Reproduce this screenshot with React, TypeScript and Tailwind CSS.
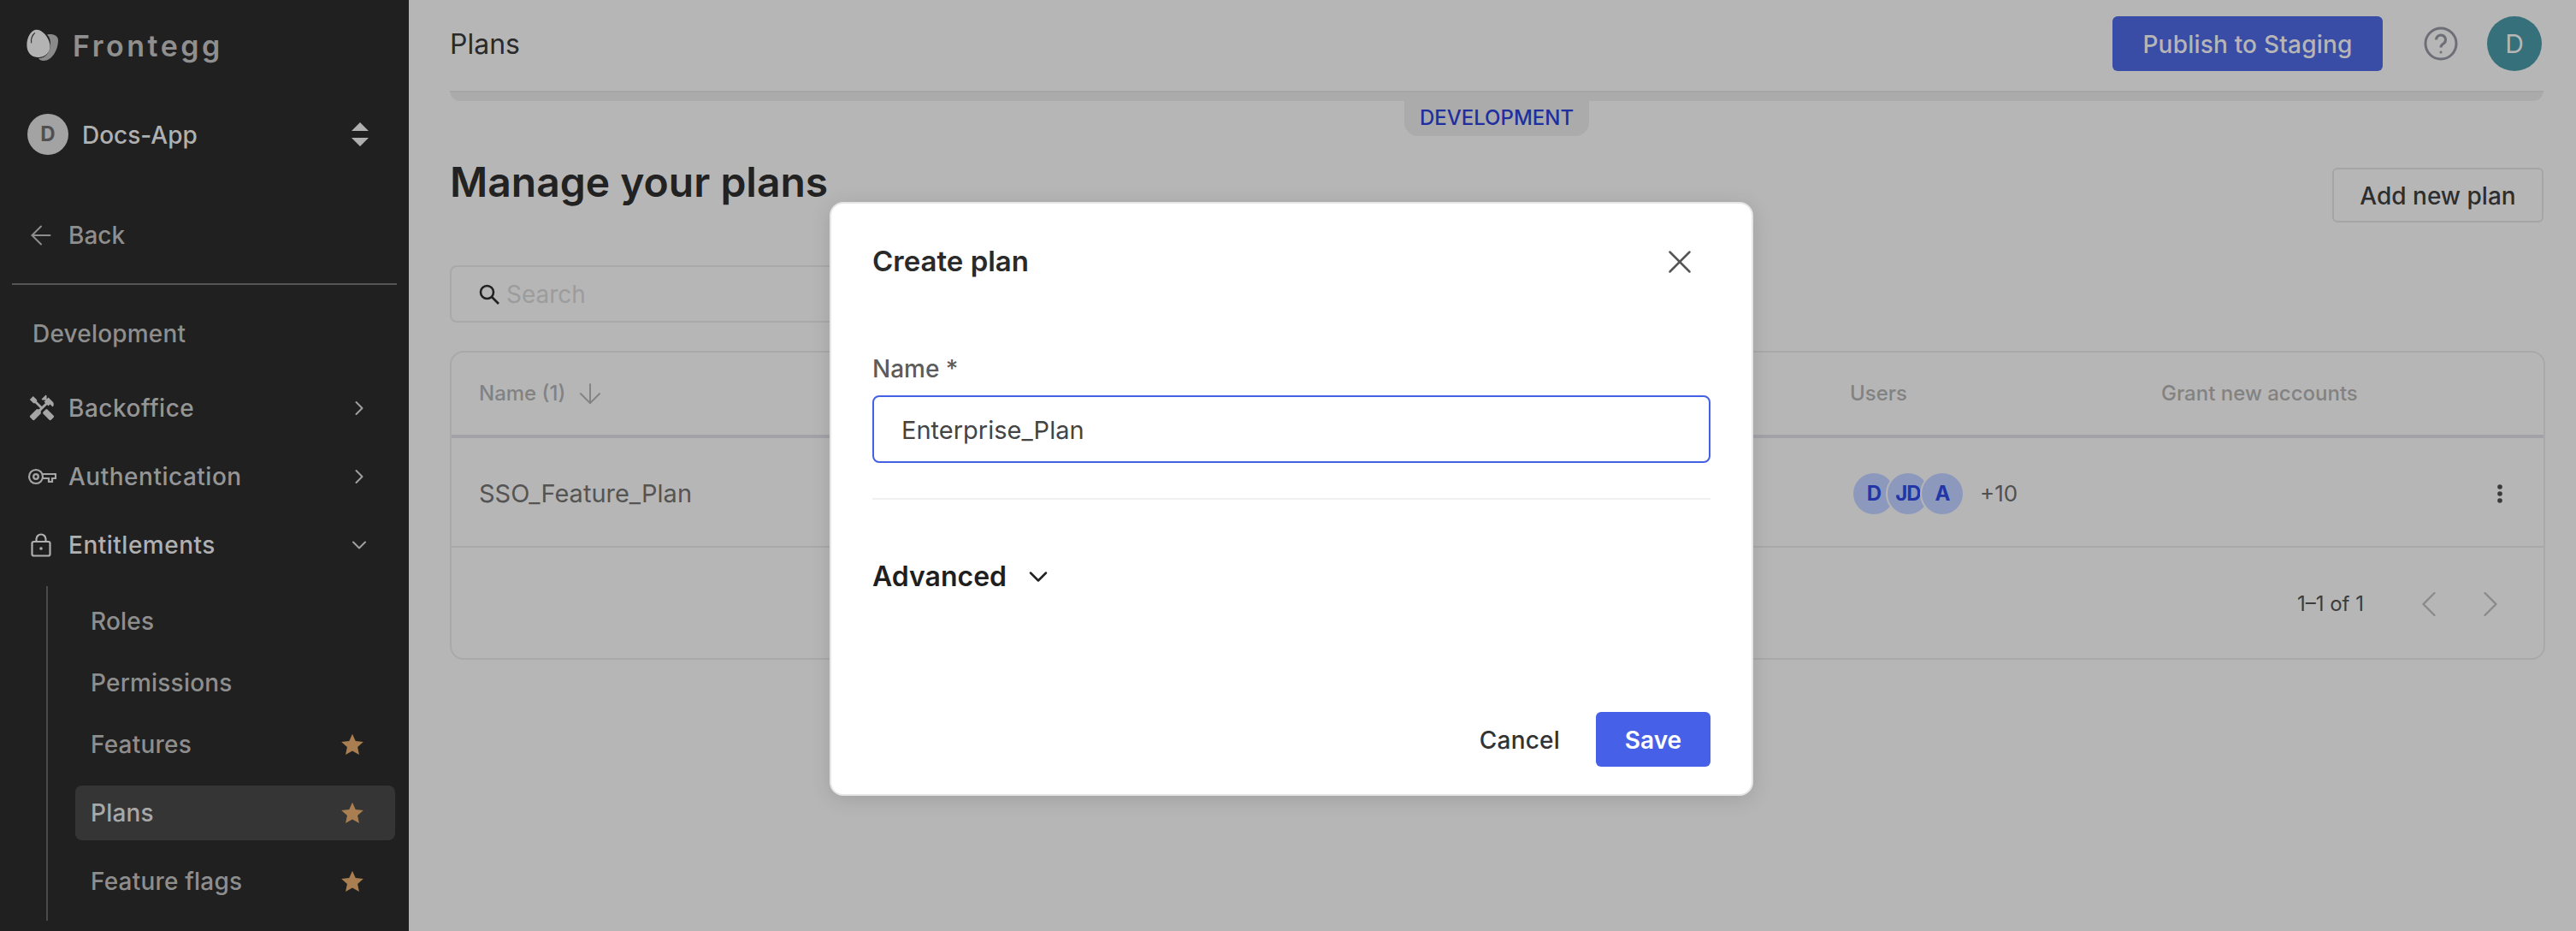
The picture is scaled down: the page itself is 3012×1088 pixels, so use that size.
import { ArrowDown, ArrowLeft, ChevronDown, ChevronLeft, ChevronRight, X } from "lucide-react"
import { MdHandyman } from "react-icons/md"

function Star() {
  return (
    <svg viewBox="0 0 24 24" className="h-[28px] w-[28px] fill-[#a97f52]">
      <path d="M12 1.5l3.2 7.1 7.8.8-5.8 5.2 1.6 7.7L12 18.4l-6.8 3.9 1.6-7.7L1 9.4l7.8-.8z" />
    </svg>
  )
}

function EggLogo() {
  return (
    <svg viewBox="0 0 38 38" className="h-[38px] w-[38px]">
      <path d="M24 6.5C30 5 37 7 37 13c0 11-7 24-17 24-3 0-5-1-6-3 9 0 14-8 14-16 0-5-1-9-4-11.500z" fill="#8a8a8a" />
      <g transform="rotate(-10 13.5 17)">
        <path d="M13.5 0.5C20 0.5 27 10 27 20c0 8-6 13-13.500 13S0 28 0 20C0 10 7 0.5 13.5 0.5z" fill="#b3b3b3" />
        <path d="M6 15c0-5 3-9 6-11" stroke="#202020" strokeWidth="1" fill="none" />
      </g>
    </svg>
  )
}

function KeyIcon() {
  return (
    <svg viewBox="0 0 34 20" className="h-[20px] w-[34px] fill-none stroke-[#a6a6a6]" strokeWidth="2.2">
      <circle cx="10" cy="10" r="8" />
      <circle cx="10" cy="10" r="2.8" />
      <path d="M18 7h15v5h-4v4h-4v-4h-7" />
    </svg>
  )
}

function LockIcon() {
  return (
    <svg viewBox="0 0 24 28" className="ml-[4px] h-[28px] w-[24px] fill-none stroke-[#b0b0b0]" strokeWidth="2.2">
      <rect x="1.5" y="10" width="21" height="16.500" rx="2" />
      <path d="M6.5 10V7a5.500 5.500 0 0 1 11 0v3" />
      <circle cx="12" cy="18" r="1.8" fill="#b0b0b0" stroke="none" />
    </svg>
  )
}

function NavItem({ icon, label, open }: { icon: React.ReactNode; label: string; open?: boolean }) {
  return (
    <div className="flex h-[80px] items-center pl-[32px] pr-[44px]">
      <div className="flex w-[48px] items-center justify-start">{icon}</div>
      <span className={`flex-1 text-[28px] font-medium tracking-[0.5px] ${open ? "text-[#b0b0b0]" : "text-[#959595]"}`}>{label}</span>
      {open ? (
        <ChevronDown className="h-[28px] w-[28px] text-[#a0a0a0]" strokeWidth={1.7} />
      ) : (
        <ChevronRight className="h-[28px] w-[28px] text-[#a0a0a0]" strokeWidth={1.7} />
      )}
    </div>
  )
}

function SubItem({ label, star, active, className }: { label: string; star?: boolean; active?: boolean; className: string }) {
  return (
    <div className={`flex items-center ${className}`}>
      <div className={`flex h-[64px] w-[374px] items-center justify-between rounded-[8px] pl-[18px] pr-[36px] ${active ? "bg-[#353535]" : ""}`}>
        <span className={`text-[28px] font-medium tracking-[0.2px] ${active ? "text-[#a8a8a8]" : "text-[#8e8e8e]"}`}>{label}</span>
        {star && <Star />}
      </div>
    </div>
  )
}

function Sidebar() {
  return (
    <aside className="flex h-full w-[478px] shrink-0 flex-col overflow-hidden bg-[#202020]">
      <div className="flex h-[106px] items-center gap-[16px] pl-[31px]">
        <EggLogo />
        <span className="text-[34px] font-semibold tracking-[3.5px] text-[#8f8f8f]">Frontegg</span>
      </div>
      <div className="mt-[27px] flex items-center pl-[32px] pr-[47px]">
        <div className="flex h-[48px] w-[48px] items-center justify-center rounded-full bg-[#a3a3a3] text-[24px] font-bold text-[#505050]">D</div>
        <span className="ml-[16px] mt-[2px] flex-1 text-[28px] font-medium text-[#b0b0b0]">Docs-App</span>
        <svg viewBox="0 0 20 28" className="h-[28px] w-[20px] fill-[#b0b0b0]">
          <path d="M10 0l10 10H0zM10 28 0 18h20z" />
        </svg>
      </div>
      <div className="mt-[74px] flex h-[40px] items-center pl-[30px] text-[#8e8e8e]">
        <ArrowLeft className="h-[36px] w-[36px]" strokeWidth={1.3} />
        <span className="ml-[14px] text-[28px] font-medium">Back</span>
      </div>
      <div className="mx-[14px] mt-[36px] h-[2px] bg-[#555555]" />
      <div className="mt-[40px] h-[34px] pl-[38px] text-[28px] font-medium leading-[34px] tracking-[0.2px] text-[#8e8e8e]">Development</div>
      <div className="mt-[30px]">
        <NavItem icon={<MdHandyman className="h-[34px] w-[34px] text-[#a6a6a6]" />} label="Backoffice" />
        <NavItem icon={<KeyIcon />} label="Authentication" />
        <NavItem icon={<LockIcon />} label="Entitlements" open />
      </div>
      <div className="ml-[54px] mt-[8px] h-[391px] border-l-2 border-[#4a4a4a] pl-[32px]">
        <SubItem label="Roles" className="mt-[5px] h-[72px]" />
        <SubItem label="Permissions" className="h-[72px]" />
        <SubItem label="Features" star className="h-[72px]" />
        <SubItem label="Plans" star active className="mt-[4px] h-[80px]" />
        <SubItem label="Feature flags" star className="h-[80px]" />
      </div>
    </aside>
  )
}

function PlansTable() {
  return (
    <div className="mt-[33px] w-[2450px] rounded-[16px] border-2 border-[#a9a9a9]">
      <div className="flex h-[100px] items-center border-b-4 border-[#a2a2a8] text-[24px] font-medium text-[#828282]">
        <div className="flex w-[1635px] items-center gap-[10px] pl-[32px]">
          <span>Name (1)</span>
          <ArrowDown className="h-[38px] w-[38px]" strokeWidth={1.2} />
        </div>
        <div className="w-[364px]">Users</div>
        <div>Grant new accounts</div>
      </div>
      <div className="flex h-[128px] items-center border-b-2 border-[#a9a9a9] pt-[3px]">
        <div className="w-[1635px] pl-[32px] text-[29px] text-[#545454]">SSO_Feature_Plan</div>
        <div className="flex flex-1 items-center pl-[4px]">
          <div className="flex">
            {["D", "JD", "A"].map((initials, index) => (
              <div
                key={initials}
                className={`flex h-[48px] w-[48px] items-center justify-center rounded-full bg-[#8c99bd] text-[24px] font-bold tracking-[-1px] text-[#2336a8] ${index > 0 ? "-ml-[8px] ring-2 ring-[#b6b6b6]" : ""}`}
              >
                {initials}
              </div>
            ))}
          </div>
          <span className="ml-[20px] text-[26px] text-[#505050]">+10</span>
        </div>
        <svg viewBox="0 0 8 24" className="mr-[47px] h-[24px] w-[8px] fill-[#3a3a3a]">
          <circle cx="4" cy="4" r="2.8" />
          <circle cx="4" cy="12" r="2.8" />
          <circle cx="4" cy="20" r="2.8" />
        </svg>
      </div>
      <div className="flex h-[129px] items-center justify-end pr-[36px] pt-[3px]">
        <span className="text-[24px] text-[#3c3c3c]">1–1 of 1</span>
        <ChevronLeft className="ml-[50px] h-[52px] w-[52px] text-[#8a8a8a]" strokeWidth={1.1} />
        <ChevronRight className="ml-[20px] h-[52px] w-[52px] text-[#8a8a8a]" strokeWidth={1.1} />
      </div>
    </div>
  )
}

function Main() {
  return (
    <main className="flex h-full flex-1 flex-col overflow-hidden bg-[#b6b6b6] pl-[48px] pr-[36px]">
      <header className="mr-[4px] flex h-[106px] shrink-0 items-start justify-between pt-[19px]">
        <span className="mt-[14px] text-[32px] leading-[38px] text-[#2a2a2a]">Plans</span>
        <div className="flex items-center">
          <button className="h-[64px] w-[316px] rounded-[6px] bg-[#3a4da6] pt-[2px] text-[28px] font-medium tracking-[0.2px] text-[#b6b6b6]">Publish to Staging</button>
          <svg viewBox="0 0 40 40" className="ml-[48px] h-[40px] w-[40px] fill-none stroke-[#6e6e78]" strokeWidth="3">
            <circle cx="20" cy="20" r="18" />
            <path d="M14.5 15.5a5.500 5.500 0 1 1 8.500 4.600c-2 1.300-3 2.300-3 4.400" />
            <circle cx="20" cy="30" r="1.5" fill="#6e6e78" stroke="none" />
          </svg>
          <div className="ml-[34px] flex h-[64px] w-[64px] items-center justify-center rounded-full bg-[#36717b] text-[30px] text-[#b6b6b6]">D</div>
        </div>
      </header>
      <div className="relative mr-[2px] h-[12px] shrink-0 rounded-b-[12px] border-t-2 border-[#a6a6a6] bg-[#ababab]">
        <div className="absolute left-[1116px] top-[10px] flex h-[41px] w-[216px] items-center justify-center rounded-b-[16px] bg-[#ababab] pb-[1px] text-[24px] font-medium text-[#1f2f9f]">DEVELOPMENT</div>
      </div>
      <div className="mr-[2px] mt-[66px] flex items-start justify-between">
        <h1 className="text-[48px] font-semibold leading-[58px] text-[#222222]">Manage your plans</h1>
        <button className="mt-[12px] h-[64px] w-[247px] rounded-[6px] border-2 border-[#a5a5a5] pt-[2px] text-[28px] font-medium text-[#2e2e2e]">Add new plan</button>
      </div>
      <div className="mt-[50px] flex h-[67px] w-[800px] items-center rounded-[8px] border-2 border-[#a9a9a9] pl-[32px]">
        <svg viewBox="0 0 24 24" className="h-[24px] w-[24px] fill-none stroke-[#222222]" strokeWidth="2.6">
          <circle cx="9.5" cy="9.5" r="7.5" />
          <path d="M15 15l8 8" />
        </svg>
        <span className="ml-[8px] text-[28px] text-[#9c9c9c]">Search</span>
      </div>
      <PlansTable />
    </main>
  )
}

function CreatePlanModal() {
  return (
    <div className="absolute left-[970px] top-[236px] flex h-[694px] w-[1080px] flex-col rounded-[16px] border-2 border-[#e6e6e6] bg-white px-[48px] shadow-[0_4px_24px_rgba(0,0,0,0.12)]">
      <div className="mt-[48px] flex h-[40px] items-center justify-between">
        <span className="text-[33px] font-semibold text-[#2a2a2a]">Create plan</span>
        <X className="mr-[13px] h-[46px] w-[46px] text-[#555555]" strokeWidth={1.3} />
      </div>
      <label className="mt-[88px] text-[28px] font-medium leading-[34px] text-[#5c5c5c]">Name *</label>
      <div className="mt-[14px] flex h-[79px] items-center rounded-[8px] border-2 border-[#4461e6] pl-[32px] pt-[2px] text-[29px] text-[#444444]">Enterprise_Plan</div>
      <div className="mt-[41px] h-[2px] bg-[#f0f0f2]" />
      <div className="mt-[70px] flex h-[40px] items-center">
        <span className="text-[32px] font-semibold text-[#1f1f1f]">Advanced</span>
        <ChevronDown className="ml-[19px] h-[36px] w-[36px] text-[#222222]" strokeWidth={1.7} />
      </div>
      <div className="mt-[138px] flex items-center justify-end">
        <span className="mt-[2px] text-[28px] font-medium tracking-[0.2px] text-[#333333]">Cancel</span>
        <button className="ml-[42px] h-[64px] w-[134px] rounded-[6px] bg-[#4661e8] pt-[2px] text-[28px] font-semibold text-white">Save</button>
      </div>
    </div>
  )
}

export default function App() {
  return (
    <div className="relative flex h-[1088px] w-[3012px] overflow-hidden font-['Inter',sans-serif]">
      <Sidebar />
      <Main />
      <CreatePlanModal />
    </div>
  )
}
